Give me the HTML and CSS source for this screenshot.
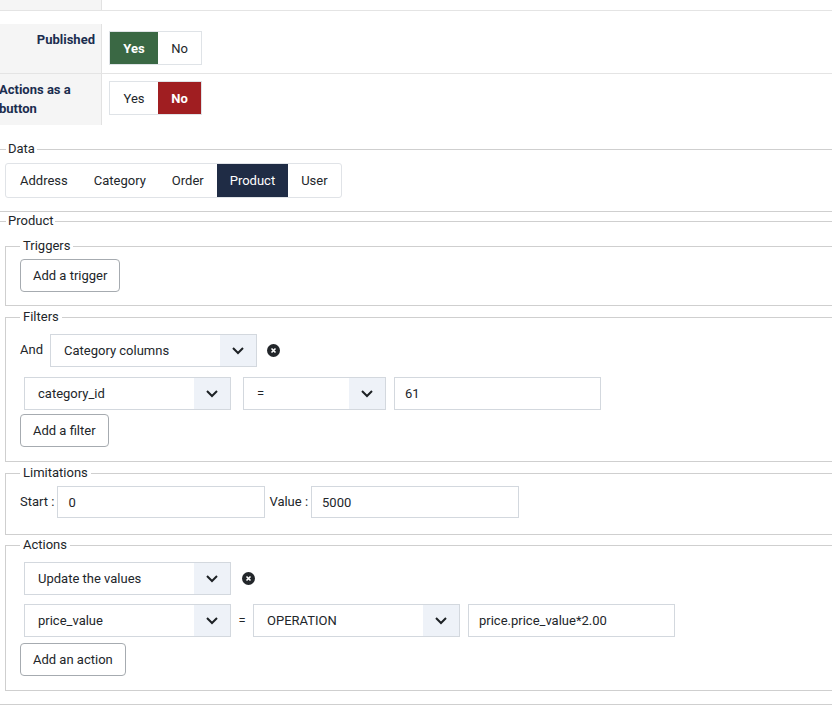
FILE: index.html
```html
<!DOCTYPE html>
<html lang="en">
<head>
    <meta charset="UTF-8">
    <meta name="viewport" content="width=device-width, initial-scale=1.0">
    <title>Mass action</title>
    <link rel="stylesheet" href="styles.css">
</head>
<body>

<div class="page">

    <!-- Options table -->
    <div class="opt-row cut">
        <div class="opt-label"></div>
        <div class="opt-value"></div>
    </div>
    <div class="opt-row published">
        <div class="opt-label"><span>Published</span></div>
        <div class="opt-value">
            <div class="switch">
                <span class="yes on">Yes</span>
                <span class="no">No</span>
            </div>
        </div>
    </div>
    <div class="opt-row button-row">
        <div class="opt-label"><span class="wrap">Actions as a button</span></div>
        <div class="opt-value">
            <div class="switch">
                <span class="yes">Yes</span>
                <span class="no on">No</span>
            </div>
        </div>
    </div>

    <!-- Data type -->
    <fieldset class="outer data">
        <legend>Data</legend>
        <div class="tabs">
            <span class="tab">Address</span>
            <span class="tab">Category</span>
            <span class="tab">Order</span>
            <span class="tab active">Product</span>
            <span class="tab">User</span>
        </div>
    </fieldset>

    <fieldset class="outer product">
        <legend>Product</legend>

        <fieldset class="inner triggers">
            <legend>Triggers</legend>
            <button class="btn">Add a trigger</button>
        </fieldset>

        <fieldset class="inner filters">
            <legend>Filters</legend>
            <div class="line first">
                <span class="word">And</span>
                <div class="select"><span class="val">Category columns</span><span class="arrow"><svg width="14" height="9" viewBox="0 0 14 9"><path d="M2 2l5 5 5-5" fill="none" stroke="#1d2125" stroke-width="2"/></svg></span></div>
                <span class="remove"><svg width="13" height="13" viewBox="0 0 13 13"><circle cx="6.5" cy="6.5" r="6.5" fill="#22262a"/><path d="M4.5 4.5l4 4M8.5 4.5l-4 4" stroke="#fff" stroke-width="1.6"/></svg></span>
            </div>
            <div class="line indent">
                <div class="select"><span class="val">category_id</span><span class="arrow"><svg width="14" height="9" viewBox="0 0 14 9"><path d="M2 2l5 5 5-5" fill="none" stroke="#1d2125" stroke-width="2"/></svg></span></div>
                <div class="select small gap-l"><span class="val">=</span><span class="arrow"><svg width="14" height="9" viewBox="0 0 14 9"><path d="M2 2l5 5 5-5" fill="none" stroke="#1d2125" stroke-width="2"/></svg></span></div>
                <input class="field gap-s" type="text" value="61">
            </div>
            <button class="btn after">Add a filter</button>
        </fieldset>

        <fieldset class="inner limits">
            <legend>Limitations</legend>
            <div class="line">
                <span class="word">Start :</span>
                <input class="field lim" type="text" value="0">
                <span class="word value-lbl">Value :</span>
                <input class="field lim" type="text" value="5000">
            </div>
        </fieldset>

        <fieldset class="inner actions">
            <legend>Actions</legend>
            <div class="line first indent">
                <div class="select"><span class="val">Update the values</span><span class="arrow"><svg width="14" height="9" viewBox="0 0 14 9"><path d="M2 2l5 5 5-5" fill="none" stroke="#1d2125" stroke-width="2"/></svg></span></div>
                <span class="remove"><svg width="13" height="13" viewBox="0 0 13 13"><circle cx="6.5" cy="6.5" r="6.5" fill="#22262a"/><path d="M4.5 4.5l4 4M8.5 4.5l-4 4" stroke="#fff" stroke-width="1.6"/></svg></span>
            </div>
            <div class="line indent second">
                <div class="select"><span class="val">price_value</span><span class="arrow"><svg width="14" height="9" viewBox="0 0 14 9"><path d="M2 2l5 5 5-5" fill="none" stroke="#1d2125" stroke-width="2"/></svg></span></div>
                <span class="eq">=</span>
                <div class="select"><span class="val">OPERATION</span><span class="arrow"><svg width="14" height="9" viewBox="0 0 14 9"><path d="M2 2l5 5 5-5" fill="none" stroke="#1d2125" stroke-width="2"/></svg></span></div>
                <input class="field gap-s" type="text" value="price.price_value*2.00">
            </div>
            <button class="btn after2">Add an action</button>
        </fieldset>
    </fieldset>

</div>

</body>
</html>
```

FILE: styles.css
```css
html, body {
    margin: 0;
    padding: 0;
    overflow: hidden;
    background-color: #fff;
}

body {
    font-family: Roboto, 'Liberation Sans', sans-serif;
    font-size: 13px;
    color: #22262a;
}

.page {
    width: 860px;
    margin-left: -2px;
}

/* options table */
.opt-row {
    display: flex;
    border-bottom: 1px solid #e4e4e4;
}

.opt-label {
    width: 104px;
    flex: none;
    background-color: #f5f5f5;
    border-right: 1px solid #e2e2e2;
    box-sizing: border-box;
    text-align: right;
    font-weight: bold;
    color: #1b2d4f;
    line-height: 19px;
}

.opt-value {
    flex: 1;
    padding-left: 7px;
}

.opt-row.cut {
    height: 10px;
}

.opt-row.published {
    height: 62px;
}

.opt-row.published .opt-label {
    margin-top: 13px;
    padding: 6px 6px 0 0;
}

.opt-row.published .opt-value {
    padding-top: 20px;
}

.opt-row.button-row {
    height: 51px;
    border-bottom: none;
}

.opt-row.button-row .opt-label {
    padding-top: 6px;
    text-align: left;
}

.opt-row.button-row .wrap {
    display: block;
    margin-left: 1px;
    width: 80px;
}

.opt-row.button-row .opt-value {
    padding-top: 7px;
}

.switch {
    display: inline-flex;
    border: 1px solid #dfe3e7;
    height: 32px;
}

.switch span {
    display: flex;
    align-items: center;
    justify-content: center;
    font-weight: normal;
}

.switch .yes {
    width: 48px;
}

.switch .no {
    width: 43px;
}

.switch .yes.on {
    background-color: #3a6844;
    color: #fff;
    font-weight: bold;
}

.switch .no.on {
    background-color: #a01e21;
    color: #fff;
    font-weight: bold;
}

/* fieldsets */
fieldset {
    margin: 0;
    min-width: 0;
}

legend {
    line-height: 16px;
    padding: 0 3px;
}

fieldset.outer {
    border: none;
    border-top: 1px solid #cfcfcf;
    border-bottom: 1px solid #cfcfcf;
    padding: 0;
}

fieldset.outer > legend {
    margin-left: 1px;
    padding: 0 2px;
}

fieldset.data {
    margin-top: 16px;
    padding: 6px 0 13px 7px;
}

fieldset.product {
    margin-top: 1px;
    padding: 9px 0 13px 7px;
}

fieldset.inner {
    border: 1px solid #cfcfcf;
    padding: 5px 14px 13px 14px;
    margin-bottom: 3px;
}

fieldset.inner > legend {
    margin-left: 0;
}

fieldset.inner.filters,
fieldset.inner.actions {
    padding-top: 9px;
    padding-bottom: 14px;
}

fieldset.inner.limits {
    padding-bottom: 16px;
    margin-bottom: 2px;
}

fieldset.inner.actions {
    margin-bottom: 0;
}

/* tabs */
.tabs {
    display: inline-flex;
    border: 1px solid #e0e3e7;
    border-radius: 3px;
    height: 33px;
    overflow: hidden;
}

.tab {
    display: flex;
    align-items: center;
    padding: 0 13px;
}

.tab:first-child {
    padding-left: 14px;
}

.tab.active {
    background-color: #1f2c45;
    color: #fff;
}

/* form controls */
.btn {
    font-family: inherit;
    font-size: 13px;
    color: #22262a;
    background-color: #fff;
    border: 1px solid #a6abb0;
    border-radius: 4px;
    height: 33px;
    padding: 0 12px;
}

.btn.after {
    margin-top: 4px;
}

.btn.after2 {
    margin-top: 6px;
}

.line {
    display: flex;
    align-items: center;
}

.line.indent {
    padding-left: 4px;
}

.line + .line {
    margin-top: 10px;
}

.line.second {
    margin-top: 9px;
}

.word {
    margin-right: 7px;
    padding-bottom: 2px;
}

.limits .word {
    margin-right: 3px;
}

.select {
    display: flex;
    width: 207px;
    height: 33px;
    box-sizing: border-box;
    border: 1px solid #d3d8de;
    flex: none;
}

.select.small {
    width: 143px;
}

.select .val {
    flex: 1;
    display: flex;
    align-items: center;
    padding-left: 13px;
}

.select .arrow {
    width: 36px;
    display: flex;
    align-items: center;
    justify-content: center;
    background-color: #eef2f8;
}

.gap-l {
    margin-left: 12px;
}

.gap-s {
    margin-left: 8px;
}

.remove {
    display: flex;
    margin-left: 10px;
}

.line.indent .remove {
    margin-left: 11px;
}

.eq {
    width: 22px;
    text-align: center;
}

.field {
    font-family: inherit;
    font-size: 13px;
    color: #22262a;
    width: 207px;
    height: 33px;
    box-sizing: border-box;
    border: 1px solid #d3d8de;
    padding: 0 10px;
    outline: none;
}

.field.lim {
    width: 208px;
    height: 32px;
}

.limits .value-lbl {
    margin-left: 4px;
    margin-right: 3px;
}
```
